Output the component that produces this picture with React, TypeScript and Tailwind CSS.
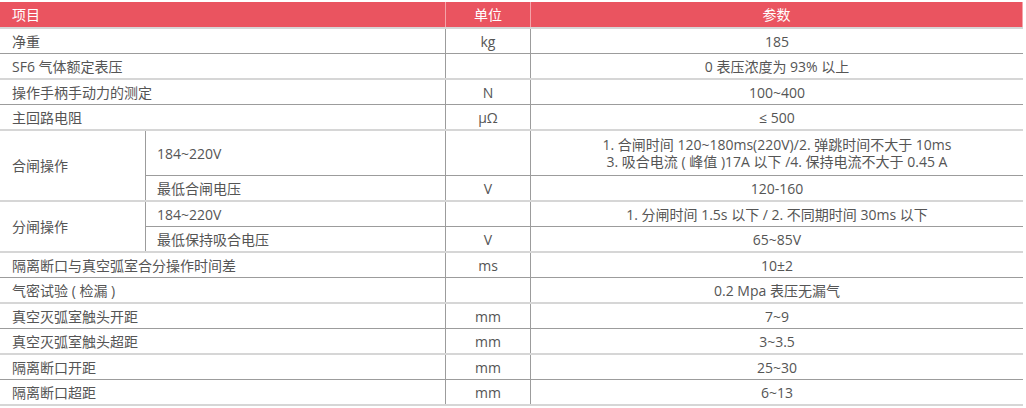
const dark = "border-b border-[#9c9c9c]";
const light = "border-b-2 border-[#d6d6d6]";

type Row = { item: string; unit: string; value: string };

const topRows: Row[] = [
  { item: "净重", unit: "kg", value: "185" },
  { item: "SF6 气体额定表压", unit: "", value: "0 表压浓度为 93% 以上" },
  { item: "操作手柄手动力的测定", unit: "N", value: "100~400" },
  { item: "主回路电阻", unit: "μΩ", value: "≤ 500" },
];

const bottomRows: Row[] = [
  { item: "隔离断口与真空弧室合分操作时间差", unit: "ms", value: "10±2" },
  { item: "气密试验 ( 检漏 )", unit: "", value: "0.2 Mpa 表压无漏气" },
  { item: "真空灭弧室触头开距", unit: "mm", value: "7~9" },
  { item: "真空灭弧室触头超距", unit: "mm", value: "3~3.5" },
  { item: "隔离断口开距", unit: "mm", value: "25~30" },
  { item: "隔离断口超距", unit: "mm", value: "6~13" },
];

function SimpleRow({ row, index }: { row: Row; index: number }) {
  const even = index % 2 === 1;
  return (
    <div className={`flex ${even ? `h-[26px] ${light}` : `h-[25px] ${dark}`}`}>
      <div className="flex w-[445px] items-center pl-3">{row.item}</div>
      <div className="flex w-[86px] items-center justify-center border-x border-[#9c9c9c]">
        {row.unit}
      </div>
      <div className="flex flex-1 items-center justify-center">{row.value}</div>
    </div>
  );
}

function SubRow({
  label,
  unit,
  children,
  className,
}: {
  label: string;
  unit: string;
  children: React.ReactNode;
  className: string;
}) {
  return (
    <div className={`flex ${className}`}>
      <div className="flex w-[299px] items-center pl-[11px]">{label}</div>
      <div className="flex w-[86px] items-center justify-center border-x border-[#9c9c9c]">
        {unit}
      </div>
      <div className="flex flex-1 flex-col items-center justify-center text-center">{children}</div>
    </div>
  );
}

export default function App() {
  return (
    <div
      className="w-[1023px] bg-white pt-[2px] text-[14px] text-[#555]"
      style={{ fontFamily: '"Open Sans", "Noto Sans CJK SC", sans-serif' }}
    >
      <div className={`flex h-[27px] bg-[#ea5460] text-white ${light}`}>
        <div className="flex w-[445px] items-center pl-3">项目</div>
        <div className="flex w-[86px] items-center justify-center border-x border-[#f4a3a9]">
          单位
        </div>
        <div className="flex flex-1 items-center justify-center border-r border-[#f4a3a9]">参数</div>
      </div>

      {topRows.map((row, i) => (
        <SimpleRow key={row.item} row={row} index={i} />
      ))}

      <div className={`flex ${light}`}>
        <div className="flex w-[146px] items-center border-r border-[#9c9c9c] pl-3">合闸操作</div>
        <div className="flex flex-1 flex-col">
          <SubRow label="184~220V" unit="" className={`h-[45px] ${dark}`}>
            <p className="leading-[17px]">1. 合闸时间 120~180ms(220V)/2. 弹跳时间不大于 10ms</p>
            <p className="leading-[17px]">3. 吸合电流 ( 峰值 )17A 以下 /4. 保持电流不大于 0.45 A</p>
          </SubRow>
          <SubRow label="最低合闸电压" unit="V" className="h-[24px]">
            120-160
          </SubRow>
        </div>
      </div>

      <div className={`flex ${light}`}>
        <div className="flex w-[146px] items-center border-r border-[#9c9c9c] pl-3">分闸操作</div>
        <div className="flex flex-1 flex-col">
          <SubRow label="184~220V" unit="" className={`h-[25px] ${dark}`}>
            1. 分闸时间 1.5s 以下 / 2. 不同期时间 30ms 以下
          </SubRow>
          <SubRow label="最低保持吸合电压" unit="V" className="h-[24px]">
            65~85V
          </SubRow>
        </div>
      </div>

      {bottomRows.map((row, i) => (
        <SimpleRow key={row.item} row={row} index={i} />
      ))}
    </div>
  );
}
